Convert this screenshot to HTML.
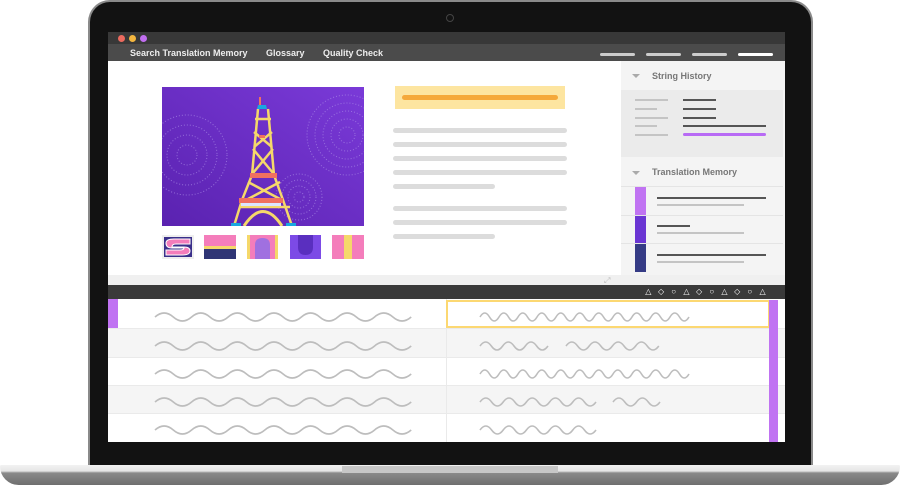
<!DOCTYPE html>
<html><head><meta charset="utf-8"><style>
*{margin:0;padding:0;box-sizing:border-box}
body{width:900px;height:485px;background:#fff;position:relative;overflow:hidden;font-family:"Liberation Sans",sans-serif}
.a{position:absolute}
.gl{position:absolute;height:5px;border-radius:3px;background:#dcdcdc}
.ln{position:absolute;height:2px;background:#555}
.lg{position:absolute;height:2px;background:#c4c4c4}
.sy{display:inline-block;width:12.7px;text-align:center}
</style></head><body>
<div class="a" style="left:88px;top:0;width:725px;height:468px;background:#8a8a8a;border-radius:22px 22px 0 0"></div>
<div class="a" style="left:90px;top:2px;width:721px;height:466px;background:#121212;border-radius:20px 20px 0 0"></div>
<div class="a" style="left:446px;top:14px;width:8px;height:8px;border-radius:50%;border:1px solid #444"></div>
<div class="a" style="left:0;top:465px;width:900px;height:20px;background:linear-gradient(#f2f2f2 0,#e6e6e6 6px,#8a8a8a 8px,#6e6e6e 100%);border-radius:3px 3px 40px 40px"></div>
<div class="a" style="left:342px;top:466px;width:216px;height:7px;background:#c7c7c7"></div>
<div class="a" style="left:108px;top:32px;width:677px;height:410px;background:#fff;overflow:hidden">
 <div class="a" style="left:0;top:0;width:677px;height:12px;background:#383838"></div>
 <div class="a" style="left:10px;top:3px;width:7px;height:7px;border-radius:50%;background:#ec6a5e"></div>
 <div class="a" style="left:21px;top:3px;width:7px;height:7px;border-radius:50%;background:#f4b63f"></div>
 <div class="a" style="left:32px;top:3px;width:7px;height:7px;border-radius:50%;background:#c16ef0"></div>
 <div class="a" style="left:0;top:12px;width:677px;height:17px;background:#4b4b4b;color:#eee;font-size:9px;font-weight:bold;line-height:19px">
  <span class="a" style="left:22px">Search Translation Memory</span>
  <span class="a" style="left:158px">Glossary</span>
  <span class="a" style="left:215px">Quality Check</span>
 </div>
 <div class="a" style="left:492px;top:21px;width:35px;height:3px;border-radius:2px;background:#ccc"></div>
 <div class="a" style="left:538px;top:21px;width:35px;height:3px;border-radius:2px;background:#ccc"></div>
 <div class="a" style="left:584px;top:21px;width:35px;height:3px;border-radius:2px;background:#ccc"></div>
 <div class="a" style="left:630px;top:21px;width:35px;height:3px;border-radius:2px;background:#fff"></div>
 <svg class="a" style="left:54px;top:55px" width="202" height="139" viewBox="0 0 202 139">
  <defs><linearGradient id="g" x1="0" y1="1" x2="1" y2="0"><stop offset="0" stop-color="#5a22b0"/><stop offset="1" stop-color="#7a3ad8"/></linearGradient></defs>
  <rect width="202" height="139" fill="url(#g)"/>
  <g fill="none" stroke="#a98ae6" stroke-width="1" stroke-dasharray="1 2" opacity=".7">
   <circle cx="25" cy="68" r="10"/><circle cx="25" cy="68" r="20"/><circle cx="25" cy="68" r="30"/><circle cx="25" cy="68" r="40"/>
   <circle cx="185" cy="48" r="8"/><circle cx="185" cy="48" r="16"/><circle cx="185" cy="48" r="24"/><circle cx="185" cy="48" r="32"/><circle cx="185" cy="48" r="40"/>
   <circle cx="137" cy="110" r="5"/><circle cx="137" cy="110" r="11"/><circle cx="137" cy="110" r="17"/><circle cx="137" cy="110" r="23"/>
  </g>
  <g stroke="#f5d86a" stroke-width="2.5" fill="none">
   <path d="M96 22 L90 88 L80 113 L72 139 M106 22 L112 88 L121 113 L130 139"/>
   <path d="M93 32h16M92 45 L110 60 M110 45 L92 60 M91 62 L111 86 M111 62 L91 86 M86 95 L118 112 M118 95 L86 112 M78 120 L128 120"/>
   <path d="M82 139 Q101 110 120 139" stroke-width="3"/>
  </g>
  <rect x="97" y="10" width="2" height="8" fill="#f07060"/>
  <path d="M96 18h8l1 4h-10z" fill="#19a7e0"/>
  <rect x="97" y="48" width="6" height="3" fill="#f07060"/>
  <rect x="88" y="86" width="27" height="5" fill="#f07060"/>
  <rect x="77" y="111" width="44" height="5" fill="#f07060"/>
  <rect x="79" y="116" width="40" height="3" fill="#dbe6ff"/>
  <rect x="69" y="136" width="10" height="3" fill="#19a7e0"/><rect x="124" y="136" width="10" height="3" fill="#19a7e0"/>
 </svg>
 <svg class="a" style="left:54px;top:203px" width="32" height="24"><rect width="32" height="24" fill="#eee"/><rect x="2" y="2" width="28" height="20" fill="#3a2f8a"/><path d="M4 8 Q4 4 12 4 H28 V9 H14 Q10 9 10 12 H22 Q28 12 28 16 Q28 20 20 20 H4 V15 H18 Q22 15 22 13 H10 Q4 13 4 8z" fill="#f47dbb" stroke="#fff" stroke-width="1"/></svg>
 <svg class="a" style="left:96px;top:203px" width="32" height="24"><rect width="32" height="24" fill="#f47dbb"/><rect y="11" width="32" height="3" fill="#f5d86a"/><rect y="14" width="32" height="10" fill="#2f3575"/></svg>
 <svg class="a" style="left:139px;top:203px" width="31" height="24"><rect width="31" height="24" fill="#f5d86a"/><rect x="3" width="25" height="24" fill="#f47dbb"/><path d="M8 24 V10 Q8 3 15.5 3 Q23 3 23 10 V24z" fill="#a070e0"/></svg>
 <svg class="a" style="left:182px;top:203px" width="31" height="24"><rect width="31" height="24" fill="#7c4ae6"/><path d="M8 0 V12 Q8 20 15.5 20 Q23 20 23 12 V0z" fill="#5a2fbf"/></svg>
 <svg class="a" style="left:224px;top:203px" width="32" height="24"><rect width="32" height="24" fill="#f47dbb"/><rect x="12" width="8" height="24" fill="#f5d86a"/></svg>
 <div class="a" style="left:287px;top:54px;width:170px;height:23px;background:#fde5a0"></div>
 <div class="a" style="left:294px;top:63px;width:156px;height:5px;border-radius:3px;background:#f5a93a"></div>
 <div class="gl" style="left:285px;top:96px;width:174px"></div>
 <div class="gl" style="left:285px;top:110px;width:174px"></div>
 <div class="gl" style="left:285px;top:124px;width:174px"></div>
 <div class="gl" style="left:285px;top:138px;width:174px"></div>
 <div class="gl" style="left:285px;top:152px;width:102px"></div>
 <div class="gl" style="left:285px;top:174px;width:174px"></div>
 <div class="gl" style="left:285px;top:188px;width:174px"></div>
 <div class="gl" style="left:285px;top:202px;width:102px"></div>
 <div class="a" style="left:513px;top:29px;width:164px;height:214px;background:#f4f4f4"></div>
 <div class="a" style="left:513px;top:58px;width:162px;height:67px;background:#ebebeb"></div>
 <div class="a" style="left:524px;top:42px;border:4px solid transparent;border-top:4px solid #aaa"></div>
 <div class="a" style="left:544px;top:39px;font-size:9px;font-weight:bold;color:#777">String History</div>
 <div class="lg" style="left:527px;top:67px;width:33px"></div><div class="ln" style="left:575px;top:67px;width:33px"></div>
 <div class="lg" style="left:527px;top:76px;width:22px"></div><div class="ln" style="left:575px;top:76px;width:33px"></div>
 <div class="lg" style="left:527px;top:85px;width:33px"></div><div class="ln" style="left:575px;top:85px;width:33px"></div>
 <div class="lg" style="left:527px;top:93px;width:22px"></div><div class="ln" style="left:575px;top:93px;width:83px"></div>
 <div class="lg" style="left:527px;top:102px;width:33px"></div><div class="a" style="left:575px;top:101px;width:83px;height:3px;background:#b86af5;border-radius:2px"></div>
 <div class="a" style="left:524px;top:139px;border:4px solid transparent;border-top:4px solid #aaa"></div>
 <div class="a" style="left:544px;top:135px;font-size:9px;font-weight:bold;color:#777">Translation Memory</div>
 <div class="a" style="left:513px;top:154px;width:162px;height:1px;background:#e4e4e4"></div>
 <div class="a" style="left:513px;top:183px;width:162px;height:1px;background:#e4e4e4"></div>
 <div class="a" style="left:513px;top:211px;width:162px;height:1px;background:#e4e4e4"></div>
 <div class="a" style="left:527px;top:155px;width:11px;height:28px;background:#c073f2"></div>
 <div class="a" style="left:527px;top:184px;width:11px;height:27px;background:#6a35d3"></div>
 <div class="a" style="left:527px;top:212px;width:11px;height:28px;background:#353b85"></div>
 <div class="ln" style="left:549px;top:165px;width:109px"></div><div class="lg" style="left:549px;top:172px;width:87px"></div>
 <div class="ln" style="left:549px;top:193px;width:33px"></div><div class="lg" style="left:549px;top:200px;width:87px"></div>
 <div class="ln" style="left:549px;top:222px;width:109px"></div><div class="lg" style="left:549px;top:229px;width:87px"></div>
 <div class="a" style="left:0;top:243px;width:677px;height:10px;background:#f0f0f0"></div>
 <div class="a" style="left:496px;top:244px;font-size:8px;color:#bbb">⤢</div>
 <div class="a" style="left:0;top:253px;width:677px;height:14px;background:#3a3a3a"></div>
 <div class="a" style="left:534px;top:254px;font-size:8px;color:#fff;line-height:12px;white-space:nowrap"><span class="sy">△</span><span class="sy">◇</span><span class="sy">○</span><span class="sy">△</span><span class="sy">◇</span><span class="sy">○</span><span class="sy">△</span><span class="sy">◇</span><span class="sy">○</span><span class="sy">△</span></div>
 <div class="a" style="left:0;top:297px;width:677px;height:29px;background:#f5f5f5"></div>
 <div class="a" style="left:0;top:354px;width:677px;height:28px;background:#f5f5f5"></div>
 <div class="a" style="left:0;top:296px;width:677px;height:1px;background:#eaeaea"></div>
 <div class="a" style="left:0;top:325px;width:677px;height:1px;background:#eaeaea"></div>
 <div class="a" style="left:0;top:353px;width:677px;height:1px;background:#eaeaea"></div>
 <div class="a" style="left:0;top:381px;width:677px;height:1px;background:#eaeaea"></div>
 <div class="a" style="left:338px;top:267px;width:1px;height:143px;background:#eaeaea"></div>
 <div class="a" style="left:0;top:267px;width:10px;height:29px;background:#c073f2"></div>
 <div class="a" style="left:338px;top:268px;width:324px;height:28px;border:2px solid #fcd872"></div>
 <div class="a" style="left:661px;top:268px;width:9px;height:142px;background:#c073f2"></div>
 <svg class="a" style="left:0;top:267px" width="677" height="143">
  <g fill="none" stroke="#bdbdbd" stroke-width="1.6">
   <path d="M47 18 q9.15 -8 18.3 0 t18.3 0 t18.3 0 t18.3 0 t18.3 0 t18.3 0 t18.3 0 t18.3 0 t18.3 0 t18.3 0 t18.3 0 t18.3 0 t18.3 0 t18.3 0"/>
   <path d="M47 47 q9.15 -8 18.3 0 t18.3 0 t18.3 0 t18.3 0 t18.3 0 t18.3 0 t18.3 0 t18.3 0 t18.3 0 t18.3 0 t18.3 0 t18.3 0 t18.3 0 t18.3 0"/>
   <path d="M47 75 q9.15 -8 18.3 0 t18.3 0 t18.3 0 t18.3 0 t18.3 0 t18.3 0 t18.3 0 t18.3 0 t18.3 0 t18.3 0 t18.3 0 t18.3 0 t18.3 0 t18.3 0"/>
   <path d="M47 103 q9.15 -8 18.3 0 t18.3 0 t18.3 0 t18.3 0 t18.3 0 t18.3 0 t18.3 0 t18.3 0 t18.3 0 t18.3 0 t18.3 0 t18.3 0 t18.3 0 t18.3 0"/>
   <path d="M47 131 q9.15 -8 18.3 0 t18.3 0 t18.3 0 t18.3 0 t18.3 0 t18.3 0 t18.3 0 t18.3 0 t18.3 0 t18.3 0 t18.3 0 t18.3 0 t18.3 0 t18.3 0"/>
   <path d="M372 18 q4.75 -8 9.5 0 t9.5 0 t9.5 0 t9.5 0 t9.5 0 t9.5 0 t9.5 0 t9.5 0 t9.5 0 t9.5 0 t9.5 0 t9.5 0 t9.5 0 t9.5 0 t9.5 0 t9.5 0 t9.5 0 t9.5 0 t9.5 0 t9.5 0 t9.5 0 t9.5 0"/>
   <path d="M372 47 q5.67 -8 11.33 0 t11.33 0 t11.33 0 t11.33 0 t11.33 0 t11.33 0"/>
   <path d="M458 47 q5.8 -8 11.6 0 t11.6 0 t11.6 0 t11.6 0 t11.6 0 t11.6 0 t11.6 0 t11.6 0"/>
   <path d="M372 75 q4.75 -8 9.5 0 t9.5 0 t9.5 0 t9.5 0 t9.5 0 t9.5 0 t9.5 0 t9.5 0 t9.5 0 t9.5 0 t9.5 0 t9.5 0 t9.5 0 t9.5 0 t9.5 0 t9.5 0 t9.5 0 t9.5 0 t9.5 0 t9.5 0 t9.5 0 t9.5 0"/>
   <path d="M372 103 q5.8 -8 11.6 0 t11.6 0 t11.6 0 t11.6 0 t11.6 0 t11.6 0 t11.6 0 t11.6 0 t11.6 0 t11.6 0"/>
   <path d="M505 103 q5.87 -8 11.75 0 t11.75 0 t11.75 0 t11.75 0"/>
   <path d="M372 131 q5.8 -8 11.6 0 t11.6 0 t11.6 0 t11.6 0 t11.6 0 t11.6 0 t11.6 0 t11.6 0 t11.6 0 t11.6 0"/>
  </g>
 </svg>
</div>
</body></html>
